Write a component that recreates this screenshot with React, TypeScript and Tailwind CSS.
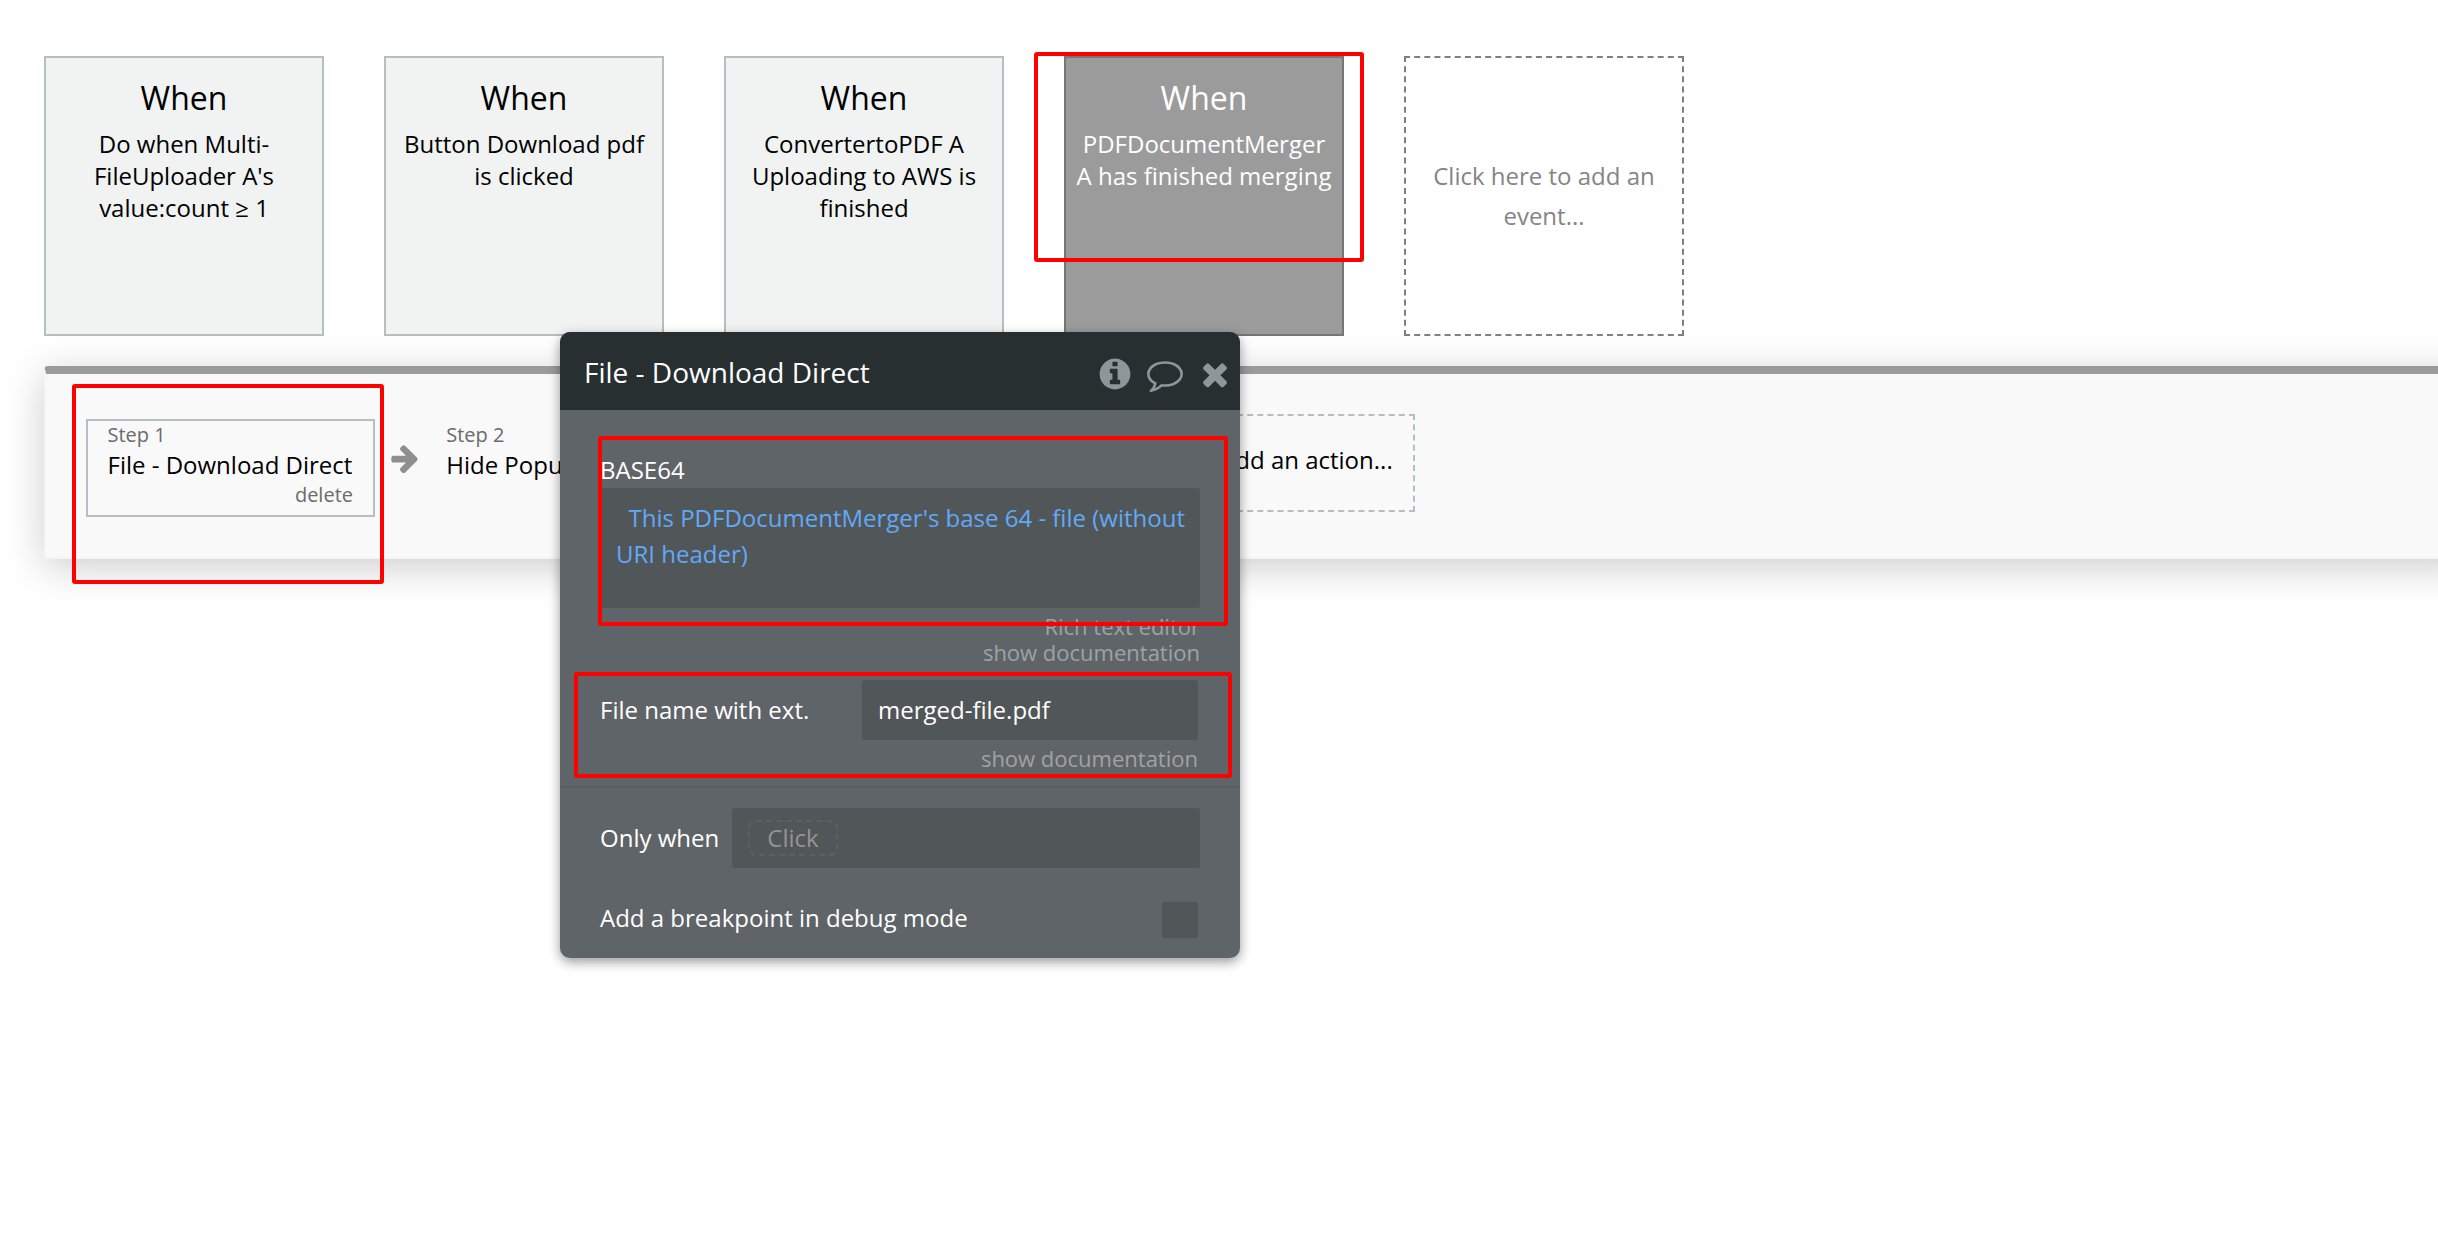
import React from 'react'

const ICONS = {
  info: 'M1152 1376v-160q0-14-9-23t-23-9h-96v-512q0-14-9-23t-23-9h-320q-14 0-23 9t-9 23v160q0 14 9 23t23 9h96v320h-96q-14 0-23 9t-9 23v160q0 14 9 23t23 9h448q14 0 23-9t9-23zm-128-896v-160q0-14-9-23t-23-9h-192q-14 0-23 9t-9 23v160q0 14 9 23t23 9h192q14 0 23-9t9-23zm640 416q0 209-103 385.5t-279.5 279.5-385.5 103-385.5-103-279.5-279.5-103-385.5 103-385.5 279.5-279.5 385.5-103 385.5 103 279.5 279.5 103 385.5z',
  comment:
    'M896 384q-204 0-381.5 69.5t-282 187.5-104.5 255q0 112 71.5 213.5t201.5 175.5l87 50-27 96q-24 91-70 172 152-63 275-171l43-38 57 6q69 8 130 8 204 0 381.5-69.5t282-187.5 104.5-255-104.5-255-282-187.5-381.5-69.5zm896 512q0 174-120 321.5t-326 233-450 85.5q-70 0-145-8-198 175-460 242-49 14-114 22h-5q-15 0-27-10.5t-16-27.5v-1q-3-4-.5-12t2-10 4.5-9.5l6-9 7-8.5 8-9q7-8 31-34.5t34.5-38 31-39.5 32.5-51 27-59 26-76q-157-89-247.5-220t-90.5-281q0-174 120-321.5t326-233 450-85.5 450 85.5 326 233 120 321.5z',
  close:
    'M1490 1322q0 40-28 68l-136 136q-28 28-68 28t-68-28l-294-294-294 294q-28 28-68 28t-68-28l-136-136q-28-28-28-68t28-68l294-294-294-294q-28-28-28-68t28-68l136-136q28-28 68-28t68 28l294 294 294-294q28-28 68-28t68 28l136 136q28 28 28 68t-28 68l-294 294 294 294q28 28 28 68z',
  arrow:
    'M1600 960q0 54-37 91l-651 651q-39 37-91 37-51 0-90-37l-75-75q-38-38-38-91t38-91l293-293h-704q-52 0-84.5-37.5t-32.5-90.5v-128q0-53 32.5-90.5t84.5-37.5h704l-293-294q-38-36-38-90t38-90l75-75q38-38 90-38 53 0 91 38l651 651q37 35 37 90z',
}

function Icon({ name, className }: { name: keyof typeof ICONS; className: string }) {
  return (
    <svg viewBox="0 0 1792 1792" fill="currentColor" className={className}>
      <path d={ICONS[name]} />
    </svg>
  )
}

const EVENTS = [
  { lines: ['Do when Multi-', "FileUploader A's", 'value:count ≥ 1'], active: false },
  { lines: ['Button Download pdf', 'is clicked'], active: false },
  { lines: ['ConvertertoPDF A', 'Uploading to AWS is', 'finished'], active: false },
  { lines: ['PDFDocumentMerger', 'A has finished merging'], active: true },
]

function EventCard({ lines, active }: { lines: string[]; active: boolean }) {
  const tone = active
    ? 'border-[#757575] bg-[#9b9b9b] text-white'
    : 'border-[#b3bfc0] bg-[#f0f3f2] text-black'
  return (
    <div className={`size-[280px] border-2 pt-5 text-center ${tone}`}>
      <h2 className="text-[32px] leading-10">When</h2>
      <p className="mt-2.5 text-2xl leading-8 whitespace-nowrap">
        {lines.map((line) => (
          <span key={line} className="block">
            {line}
          </span>
        ))}
      </p>
    </div>
  )
}

function Step({ label, title, selected }: { label: string; title: string; selected?: boolean }) {
  return (
    <div
      className={`h-[98px] border-2 pr-5 pl-[19.5px] whitespace-nowrap ${
        selected ? 'w-[289px] border-[#b3bfc0]' : 'w-[180px] border-transparent'
      }`}
    >
      <div className="pt-px text-xl leading-[26px] text-[#6b6b6b]">{label}</div>
      <div className="text-2xl leading-[34px] text-black">{title}</div>
      {selected && <div className="text-right text-xl leading-[26px] text-[#6b6b6b]">delete</div>}
    </div>
  )
}

function PropertyEditor() {
  return (
    <div className="absolute top-[332px] left-[560px] z-20 h-[626px] w-[680px] overflow-hidden rounded-[10px] bg-[#5f6468] text-2xl text-white shadow-[0_4px_12px_rgba(0,0,0,0.4)]">
      <header className="flex h-[78px] items-center gap-3.5 bg-[#282f31] pt-px pr-[7px] pl-6 text-[#8b9799]">
        <h1 className="mr-auto text-[28px] leading-9 text-white">File - Download Direct</h1>
        <Icon name="info" className="mt-[5px] size-9" />
        <Icon name="comment" className="mt-[5px] size-9" />
        <Icon name="close" className="mt-[5px] size-9" />
      </header>
      <div className="px-10 pt-[42px]">
        <div className="leading-9">BASE64</div>
        <div className="h-[120px] rounded-[3px] bg-[#515658] px-4 pt-3 indent-[12.5px] leading-9 whitespace-nowrap text-[#62a9f8]">
          This PDFDocumentMerger's base 64 - file (without
          <div className="indent-0">URI header)</div>
        </div>
        <div className="mt-[5px] h-[53px] text-right text-[22px] leading-[26px] text-[#a1a2a2]">
          <div>Rich text editor</div>
          <div>show documentation</div>
        </div>
        <div className="mt-3.5 flex h-[60px] items-center pr-0.5">
          <div className="w-[262px]">File name with ext.</div>
          <div className="flex h-[60px] flex-1 items-center rounded-[3px] bg-[#515658] pl-4">
            merged-file.pdf
          </div>
        </div>
        <div className="mt-[5px] pr-0.5 text-right text-[22px] leading-[26px] text-[#a1a2a2]">
          show documentation
        </div>
      </div>
      <div className="mt-[15px] h-0.5 bg-[#595d61]" />
      <div className="px-10 pt-5">
        <div className="flex h-[60px] items-center">
          <div className="w-[132px]">Only when</div>
          <div className="flex h-[60px] flex-1 items-center rounded-[3px] bg-[#515658] pl-4">
            <div className="flex h-9 w-[90px] items-center justify-center rounded-lg border-2 border-dashed border-[#5b6063] text-[#949494]">
              Click
            </div>
          </div>
        </div>
        <div className="mt-[34px] flex h-9 items-center justify-between pr-0.5">
          <div className="-mt-1">Add a breakpoint in debug mode</div>
          <div className="size-9 rounded-[3px] bg-[#515658]" />
        </div>
      </div>
    </div>
  )
}

export default function App() {
  return (
    <div className="relative h-[1248px] w-[2438px] overflow-hidden bg-white pt-14 pl-11 font-['Open_Sans',sans-serif]">
      <div className="relative z-10 flex gap-[60px]">
        {EVENTS.map((event) => (
          <EventCard key={event.lines[0]} {...event} />
        ))}
        <div className="flex size-[280px] items-center justify-center border-2 border-dashed border-[#7f7f7f] text-center text-2xl leading-10 text-[#858585]">
          <p>
            Click here to add an
            <br />
            event...
          </p>
        </div>
      </div>

      <div className="mt-[30px] -mr-10 flex h-[193px] rounded-[4px] border-2 border-t-8 border-[#f5f5f5] border-t-[#9b9b9b] bg-[#f9f9f9] pt-10 pl-10 shadow-[0_8px_40px_rgba(0,0,0,0.2)]">
        <div className="mt-[5px] flex">
          <Step label="Step 1" title="File - Download Direct" selected />
          <Icon name="arrow" className="mt-[22.5px] mr-[4px] ml-[13.7px] size-8 text-[#8f8f8f]" />
          <Step label="Step 2" title="Hide Popup" />
        </div>
        <div className="ml-[450px] flex h-[98px] w-[360px] items-center justify-end border-2 border-dashed border-[#b3bfc0] pr-5 pb-1.5 text-2xl whitespace-nowrap text-black">
          Click here to add an action...
        </div>
      </div>

      <PropertyEditor />

      <div className="absolute top-[52px] left-[1034px] z-40 h-[210px] w-[330px] rounded-[3px] border-4 border-[#ff0000]" />
      <div className="absolute top-[384px] left-[72px] z-40 h-[200px] w-[312px] rounded-[3px] border-4 border-[#ff0000]" />
      <div className="absolute top-[436px] left-[598px] z-40 h-[190px] w-[630px] rounded-[3px] border-4 border-[#ff0000]" />
      <div className="absolute top-[672px] left-[574px] z-40 h-[106px] w-[658px] rounded-[3px] border-4 border-[#ff0000]" />
    </div>
  )
}
